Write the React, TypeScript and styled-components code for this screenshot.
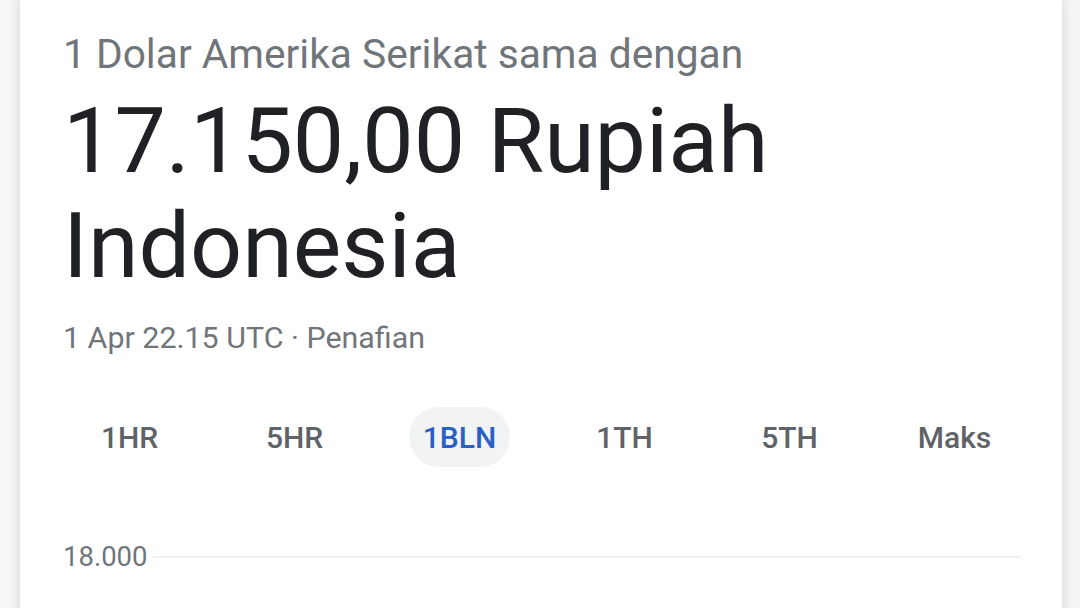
import React from 'react';
import styled, { createGlobalStyle } from 'styled-components';

const GlobalStyle = createGlobalStyle`
  html, body {
    margin: 0;
    padding: 0;
    background: #f6f6f6;
    font-family: Roboto, 'Liberation Sans', Arial, sans-serif;
    overflow: hidden;
  }
`;

const Page = styled.div`
  width: 1080px;
  height: 608px;
  padding: 0 18px 0 20px;
  box-sizing: border-box;
  overflow: hidden;
`;

const Card = styled.div`
  margin-top: -10px;
  background: #ffffff;
  border-radius: 12px;
  box-shadow: 0 0 14px rgba(0, 0, 0, 0.14);
  padding: 40px 41px 60px 43px;
  min-height: 700px;
  box-sizing: border-box;
`;

const Heading = styled.div`
  font-size: 40.7px;
  line-height: 48px;
  color: #70757a;
  white-space: nowrap;
`;

const Amount = styled.div`
  margin-top: 10px;
  font-size: 91.5px;
  line-height: 105px;
  color: #202124;
  width: 760px;
`;

const Meta = styled.div`
  margin-top: 20px;
  font-size: 30.4px;
  line-height: 40px;
  color: #70757a;
`;

const Tabs = styled.div`
  margin: 49px -16px 0 -16px;
  display: grid;
  grid-template-columns: repeat(6, 1fr);
`;

const Tab = styled.div<{ $active?: boolean }>`
  justify-self: center;
  height: 60px;
  padding: 0 14px;
  border-radius: 30px;
  display: flex;
  align-items: center;
  font-size: 30px;
  font-weight: 500;
  color: ${(p) => (p.$active ? '#2a60c6' : '#5f6368')};
  background: ${(p) => (p.$active ? '#f1f3f4' : 'transparent')};
`;

const Chart = styled.div`
  margin-top: 74px;
`;

const GridRow = styled.div`
  display: flex;
  align-items: center;
  gap: 5px;
`;

const AxisLabel = styled.span`
  font-size: 27.5px;
  line-height: 32px;
  color: #70757a;
`;

const GridLine = styled.div`
  flex: 1;
  height: 2px;
  background: #efefef;
`;

const ranges = ['1HR', '5HR', '1BLN', '1TH', '5TH', 'Maks'];

export default function App() {
  return (
    <Page>
      <GlobalStyle />
      <Card>
        <Heading>1 Dolar Amerika Serikat sama dengan</Heading>
        <Amount>17.150,00 Rupiah Indonesia</Amount>
        <Meta>1 Apr 22.15 UTC · Penafian</Meta>
        <Tabs>
          {ranges.map((r) => (
            <Tab key={r} $active={r === '1BLN'}>
              {r}
            </Tab>
          ))}
        </Tabs>
        <Chart>
          <GridRow>
            <AxisLabel>18.000</AxisLabel>
            <GridLine />
          </GridRow>
        </Chart>
      </Card>
    </Page>
  );
}
